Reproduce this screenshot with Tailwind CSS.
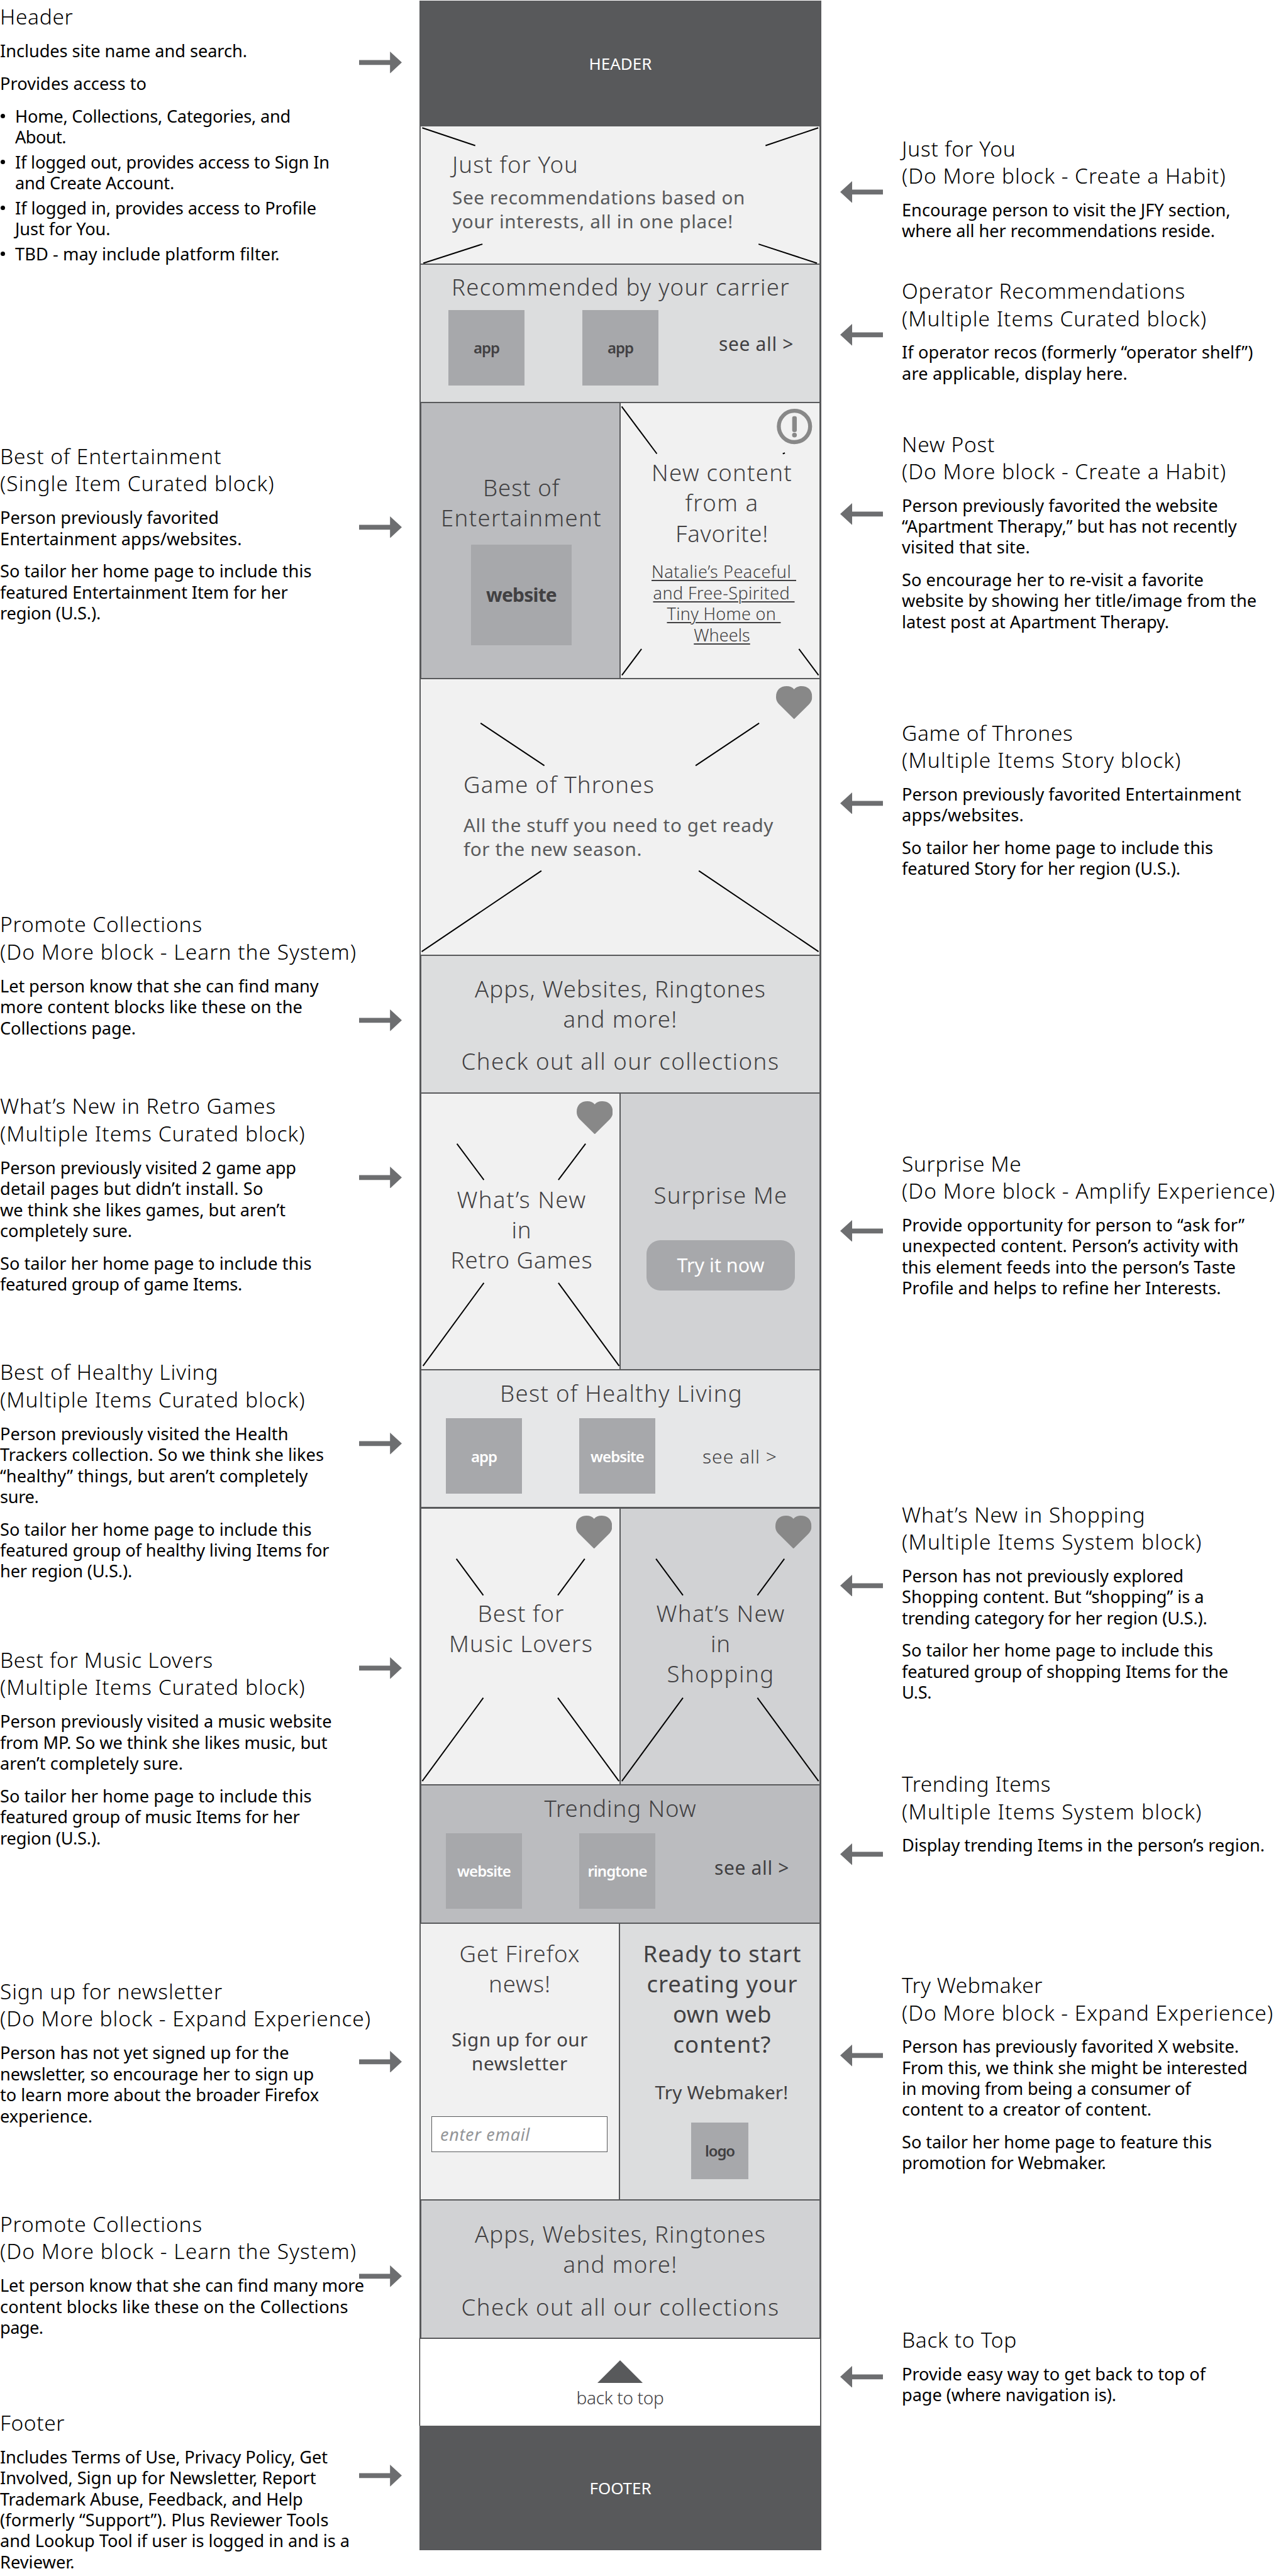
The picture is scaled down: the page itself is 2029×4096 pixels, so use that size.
<!DOCTYPE html>
<html lang="en">
<head>
<meta charset="utf-8">
<title>Home page wireframe</title>
<script src="https://cdn.jsdelivr.net/npm/@tailwindcss/browser@4"></script>
</head>
<body class="bg-white text-black font-['Noto_Sans','Open_Sans',sans-serif] w-[2029px] h-[4096px] overflow-hidden [&_span]:block [&_span]:w-fit [&_span]:whitespace-nowrap">

<!-- Shared shapes -->
<svg class="hidden">
  <symbol id="right" viewBox="0 0 68 34.7"><path fill="#6d6e70" d="M0 13.5H49.2V0L68 17.35L49.2 34.7V21.2H0Z"/></symbol>
  <symbol id="left" viewBox="0 0 68 34.7"><path fill="#6d6e70" d="M68 13.5H19V0L0 17.35L19 34.7V21.2H68Z"/></symbol>
  <symbol id="heart" viewBox="0 0 57.4 52.5"><path fill="#888" d="M28.7 52.5L5.5 29.5C1.5 25.5 0 22 0 17C0 6 7 0 17 0C22 0 26 1.5 28.7 5C31.4 1.5 35.4 0 40.4 0C50.4 0 57.4 6 57.4 17C57.4 22 55.9 25.5 51.9 29.5Z"/></symbol>
</svg>

<div class="flex h-full">

<!-- Left notes -->
<aside class="w-[667px] shrink-0 pt-[5px] text-[27.2px] leading-[33.4px] [&_section]:flex [&_section>div]:w-[570.8px] [&_section>div]:shrink-0 [&_section>svg]:w-[68px] [&_section>svg]:h-[34.7px] [&_section>svg]:shrink-0 [&_h2]:text-[33.5px] [&_h2]:leading-[43.4px] [&_h2]:font-light [&_h2]:mb-[15.6px] [&_p+p]:mt-[18.2px]">
  <section class="h-[698.9px]">
    <div>
      <h2><span data-w="116.5">Header</span></h2>
      <p><span data-w="393">Includes site name and search.</span></p>
      <p><span data-w="233">Provides access to</span></p>
      <ul class="mt-[18.6px] flex flex-col gap-[6.2px] [&>li]:flex [&>li>i]:w-6 [&>li>i]:pt-[13.5px] [&>li>i]:shrink-0">
        <li><i><b class="block size-[7px] ml-px rounded-full bg-black"></b></i><div><span data-w="438">Home, Collections, Categories, and</span><span data-w="81">About.</span></div></li>
        <li><i><b class="block size-[7px] ml-px rounded-full bg-black"></b></i><div><span data-w="500">If logged out, provides access to Sign In</span><span data-w="253">and Create Account.</span></div></li>
        <li><i><b class="block size-[7px] ml-px rounded-full bg-black"></b></i><div><span data-w="479">If logged in, provides access to Profile</span><span data-w="151.5">Just for You.</span></div></li>
        <li><i><b class="block size-[7px] ml-px rounded-full bg-black"></b></i><div><span data-w="420.5">TBD - may include platform filter.</span></div></li>
      </ul>
    </div>
    <svg class="mt-[76.9px]"><use href="#right"/></svg>
  </section>
  <section class="h-[744.5px]">
    <div>
      <h2><span data-w="352.5">Best of Entertainment</span><span data-w="436.5">(Single Item Curated block)</span></h2>
      <p><span data-w="348">Person previously favorited</span><span data-w="384.5">Entertainment apps/websites.</span></p>
      <p><span data-w="495.5">So tailor her home page to include this</span><span data-w="457.5">featured Entertainment Item for her</span><span data-w="160">region (U.S.).</span></p>
    </div>
    <svg class="mt-[116.8px]"><use href="#right"/></svg>
  </section>
  <section class="h-[289.1px]">
    <div>
      <h2><span data-w="322">Promote Collections</span><span data-w="567">(Do More block - Learn the System)</span></h2>
      <p><span data-w="506.5">Let person know that she can find many</span><span data-w="481">more content blocks like these on the</span><span data-w="216">Collections page.</span></p>
    </div>
    <svg class="mt-[156.9px]"><use href="#right"/></svg>
  </section>
  <section class="h-[422.8px]">
    <div>
      <h2><span data-w="439">What’s New in Retro Games</span><span data-w="485.5">(Multiple Items Curated block)</span></h2>
      <p><span data-w="471">Person previously visited 2 game app</span><span data-w="418.5">detail pages but didn’t install. So</span><span data-w="454">we think she likes games, but aren’t</span><span data-w="210">completely sure.</span></p>
      <p><span data-w="495.5">So tailor her home page to include this</span><span data-w="385">featured group of game Items.</span></p>
    </div>
    <svg class="mt-[117.1px]"><use href="#right"/></svg>
  </section>
  <section class="h-[457.6px]">
    <div>
      <h2><span data-w="347.5">Best of Healthy Living</span><span data-w="485.5">(Multiple Items Curated block)</span></h2>
      <p><span data-w="458.5">Person previously visited the Health</span><span data-w="515">Trackers collection. So we think she likes</span><span data-w="489.5">“healthy” things, but aren’t completely</span><span data-w="61.5">sure.</span></p>
      <p><span data-w="495.5">So tailor her home page to include this</span><span data-w="523.5">featured group of healthy living Items for</span><span data-w="210">her region (U.S.).</span></p>
    </div>
    <svg class="mt-[117.7px]"><use href="#right"/></svg>
  </section>
  <section class="h-[527px]">
    <div>
      <h2><span data-w="339">Best for Music Lovers</span><span data-w="485.5">(Multiple Items Curated block)</span></h2>
      <p><span data-w="527.5">Person previously visited a music website</span><span data-w="520.5">from MP. So we think she likes music, but</span><span data-w="291">aren’t completely sure.</span></p>
      <p><span data-w="495.5">So tailor her home page to include this</span><span data-w="476.5">featured group of music Items for her</span><span data-w="160">region (U.S.).</span></p>
    </div>
    <svg class="mt-[17px]"><use href="#right"/></svg>
  </section>
  <section class="h-[369.9px]">
    <div>
      <h2><span data-w="354">Sign up for newsletter</span><span data-w="590">(Do More block - Expand Experience)</span></h2>
      <p><span data-w="459.5">Person has not yet signed up for the</span><span data-w="499">newsletter, so encourage her to sign up</span><span data-w="507">to learn more about the broader Firefox</span><span data-w="147">experience.</span></p>
    </div>
    <svg class="mt-[115.9px]"><use href="#right"/></svg>
  </section>
  <section class="h-[316.1px]">
    <div>
      <h2><span data-w="322">Promote Collections</span><span data-w="567">(Do More block - Learn the System)</span></h2>
      <p><span data-w="579">Let person know that she can find many more</span><span data-w="553.5">content blocks like these on the Collections</span><span data-w="68.5">page.</span></p>
    </div>
    <svg class="mt-[87.7px]"><use href="#right"/></svg>
  </section>
  <section>
    <div>
      <h2><span data-w="103">Footer</span></h2>
      <p><span data-w="521">Includes Terms of Use, Privacy Policy, Get</span><span data-w="502.5">Involved, Sign up for Newsletter, Report</span><span data-w="481.5">Trademark Abuse, Feedback, and Help</span><span data-w="522.5">(formerly “Support”). Plus Reviewer Tools</span><span data-w="556">and Lookup Tool if user is logged in and is a</span><span data-w="118.5">Reviewer.</span></p>
    </div>
    <svg class="mt-[88.4px]"><use href="#right"/></svg>
  </section>
</aside>

<!-- Page wireframe -->
<main class="w-[639px] shrink-0 pt-px text-[#414042] [&>*]:relative [&>*]:border-[#58595b] [&_h3]:text-[36.6px] [&_h3]:leading-[48.1px] [&_h3]:font-light [&_svg.x]:absolute [&_svg.x]:left-0 [&_svg.x]:top-0 [&_svg.x]:stroke-black [&_svg.x]:stroke-2 [&_svg.x]:overflow-visible">

  <header class="h-[200px] bg-[#58595b] text-white text-[26px] flex items-center justify-center"><span data-w="100">HEADER</span></header>

  <section class="h-[218px] bg-[#f1f1f1] border-l-2 border-r-3 pt-[35.5px] pl-[50px]">
    <svg class="x" width="634" height="218" viewBox="669 201 634 218"><path fill="none" d="M671.4 203.2L755.7 231.5M1301.2 203.2L1217.3 231.5M767.2 388.1L673.1 418.5M1206.2 388.1L1299.1 418.5"/></svg>
    <h3><span data-w="201">Just for You</span></h3>
    <p class="mt-[10.9px] text-[29.7px] leading-[37.8px] text-[#58595b]"><span data-w="466">See recommendations based on</span><span data-w="447">your interests, all in one place!</span></p>
  </section>

  <section class="h-[220px] bg-[#dcddde] border-l-2 border-r-3 border-t-2 pt-[11px]">
    <h3 class="pl-[49px]"><span data-w="538">Recommended by your carrier</span></h3>
    <div class="mt-[13px] flex items-center pl-[44px] text-[24px] font-semibold">
      <div class="w-[121px] h-[120px] shrink-0 bg-[#a7a8ab] flex items-center justify-center"><span data-w="41">app</span></div>
      <div class="ml-[92px] w-[121px] h-[120px] shrink-0 bg-[#a7a8ab] flex items-center justify-center"><span data-w="41">app</span></div>
      <div class="ml-[96px] pb-[14px] text-[30px] font-normal"><span data-w="119">see all &gt;</span></div>
    </div>
  </section>

  <section class="h-[439px] border-l-3 border-r-3 border-t-2 flex">
    <div class="w-[317px] shrink-0 border-r-2 border-[#58595b] bg-[#bbbcbf] pt-[110.4px] pl-[3px] [&_span]:mx-auto">
      <h3><span data-w="122">Best of</span><span data-w="256">Entertainment</span></h3>
      <div class="mt-[18px] mx-auto w-[160px] h-[160px] bg-[#a7a8ab] flex items-center text-[30px] font-bold"><span data-w="112">website</span></div>
    </div>
    <div class="w-[316px] shrink-0 bg-[#f1f1f1] pt-[86.4px] pl-[6px] [&_span]:mx-auto">
      <h3><span data-w="224">New content</span><span data-w="117">from a</span><span data-w="148">Favorite!</span></h3>
      <p class="mt-[20.3px] text-[27px] leading-[33.6px] font-light [&>span]:underline [&>span]:underline-offset-[3px] [&>span]:decoration-[2px] [&>span]:relative"><span class="left-[3px]" data-w="230">Natalie’s Peaceful&nbsp;</span><span class="left-[3px]" data-w="225">and Free-Spirited&nbsp;</span><span class="left-[3px]" data-w="181">Tiny Home on&nbsp;</span><span data-w="89.5">Wheels</span></p>
    </div>
    <svg class="x" width="633" height="437" viewBox="670 641 633 437">
      <path fill="none" d="M988.5 646.4L1044.5 721.5M1244.7 721.5L1248.1 720.2M1020.1 1031.9L988.9 1073.6M1270.4 1031.9L1301.6 1073.6"/>
      <circle cx="1263.3" cy="678.1" r="24.9" fill="none" stroke="#888" stroke-width="6.3"/>
      <rect x="1259.7" y="661.7" width="7.3" height="25.2" rx="3" fill="#888" stroke="none"/><circle cx="1263.3" cy="691.8" r="3.8" fill="#888" stroke="none"/>
    </svg>
  </section>

  <section class="h-[440px] bg-[#f1f1f1] border-l-2 border-r-3 border-t-2 pt-[143.2px] pl-[68px]">
    <svg class="x" width="634" height="438" viewBox="669 1080 634 438"><path fill="none" d="M764.2 1149.9L865.6 1217.4M1207.1 1149.9L1106.1 1217.4M860.9 1384.6L670.5 1513.1M1111.2 1384.6L1301.6 1513.1"/></svg>
    <svg class="absolute left-[565.4px] top-[11.2px] w-[57.4px] h-[52.5px]"><use href="#heart"/></svg>
    <h3><span data-w="304">Game of Thrones</span></h3>
    <p class="mt-[22px] text-[29.7px] leading-[37.8px] text-[#58595b]"><span data-w="493">All the stuff you need to get ready</span><span data-w="284">for the new season.</span></p>
  </section>

  <section class="h-[219px] bg-[#dcddde] border-l-3 border-r-3 border-t-2 pt-[27.5px] [&_span]:mx-auto">
    <h3><span data-w="463">Apps, Websites, Ringtones</span><span data-w="182">and more!</span></h3>
    <h3 class="mt-[19.4px]"><span data-w="506">Check out all our collections</span></h3>
  </section>

  <section class="h-[440px] border-l-3 border-r-3 border-t-2 flex">
    <div class="w-[317px] shrink-0 border-r-2 border-[#58595b] bg-[#f1f1f1] pt-[143.5px] pl-[4px] [&_span]:mx-auto">
      <h3><span data-w="206">What’s New</span><span data-w="32">in</span><span data-w="226">Retro Games</span></h3>
    </div>
    <div class="w-[316px] shrink-0 bg-[#d1d2d4] pt-[137px] pl-[2px] [&_span]:mx-auto">
      <h3><span data-w="213">Surprise Me</span></h3>
      <div class="mt-[48.2px] mx-auto w-[236px] h-[80px] rounded-[22px] bg-[#a7a8ab] text-white text-[30.5px] flex items-center"><span data-w="139">Try it now</span></div>
    </div>
    <svg class="x" width="633" height="438" viewBox="670 1739 633 438"><path fill="none" d="M726.6 1818.6L769.4 1876.1M931.1 1818.6L887.9 1876.1M769.4 2039.8L672.7 2171.9M887.9 2039.8L984.5 2171.9"/></svg>
    <svg class="absolute left-[247px] top-[11.6px] w-[57.4px] h-[52.5px]"><use href="#heart"/></svg>
  </section>

  <section class="h-[219px] bg-[#e6e7e8] border-l-3 border-r-3 border-t-2 pt-[11.6px]">
    <h3 class="pl-[3px] [&_span]:mx-auto"><span data-w="386">Best of Healthy Living</span></h3>
    <div class="mt-[16.4px] flex items-center pl-[39px] text-[24px] font-semibold text-white">
      <div class="w-[121px] h-[120px] shrink-0 pt-[2px] bg-[#a7a8ab] flex items-center justify-center"><span data-w="41">app</span></div>
      <div class="ml-[91px] w-[121px] h-[120px] shrink-0 pt-[2px] bg-[#a7a8ab] flex items-center justify-center"><span data-w="85">website</span></div>
      <div class="ml-[75px] text-[30px] font-light text-[#414042]"><span data-w="119">see all &gt;</span></div>
    </div>
  </section>

  <section class="h-[441px] border-l-3 border-r-3 border-t-3 flex [&_span]:mx-auto">
    <div class="w-[317px] shrink-0 border-r-2 border-[#58595b] bg-[#f1f1f1] pt-[142.2px] pl-[2px]">
      <h3><span data-w="138">Best for</span><span data-w="229">Music Lovers</span></h3>
    </div>
    <div class="w-[316px] shrink-0 bg-[#d1d2d4] pt-[142.2px] pl-[2px]">
      <h3><span data-w="205">What’s New</span><span data-w="32">in</span><span data-w="171">Shopping</span></h3>
    </div>
    <svg class="x" width="633" height="438" viewBox="670 2399 633 438"><path fill="none" d="M725.7 2478.6L768.5 2536.6M929.8 2478.6L887 2536.6M768.5 2699.7L671.4 2832.1M887 2699.7L984.2 2832.1M1043.1 2478.6L1086 2536.6M1247.2 2478.6L1204.4 2536.6M1086 2699.7L988.8 2832.1M1204.4 2699.7L1301.6 2832.1"/></svg>
    <svg class="absolute left-[245.7px] top-[10.8px] w-[57.4px] h-[52.5px]"><use href="#heart"/></svg>
    <svg class="absolute left-[563.2px] top-[10.8px] w-[57.4px] h-[52.5px]"><use href="#heart"/></svg>
  </section>

  <section class="h-[220px] bg-[#bbbcbf] border-l-3 border-r-3 border-t-2 pt-[12px]">
    <h3 class="[&_span]:mx-auto"><span data-w="242">Trending Now</span></h3>
    <div class="mt-[16px] flex items-center pl-[39px] text-[24px] font-semibold text-white">
      <div class="w-[121px] h-[120px] shrink-0 bg-[#a7a8ab] flex items-center justify-center"><span data-w="85">website</span></div>
      <div class="ml-[91px] w-[121px] h-[120px] shrink-0 bg-[#a7a8ab] flex items-center justify-center"><span data-w="94">ringtone</span></div>
      <div class="ml-[94px] pb-[12px] text-[30px] font-normal text-[#414042]"><span data-w="119">see all &gt;</span></div>
    </div>
  </section>

  <section class="h-[440px] border-l-2 border-r-3 border-t-2 flex">
    <div class="w-[317px] shrink-0 border-r-2 border-[#58595b] bg-[#f1f1f1] pt-[22.6px]">
      <h3 class="[&_span]:mx-auto"><span data-w="192">Get Firefox</span><span data-w="99">news!</span></h3>
      <p class="mt-[46px] text-[29.7px] leading-[37.8px] [&_span]:mx-auto"><span data-w="217">Sign up for our</span><span data-w="153">newsletter</span></p>
      <div class="mt-[66px] ml-[17px] w-[280px] h-[57px] border border-[#58595b] bg-white pl-[13px] flex items-center text-[27px] italic text-[#939598]"><span data-w="143">enter email</span></div>
    </div>
    <div class="w-[317px] shrink-0 bg-[#dcddde] pt-[22.6px] [&_span]:mx-auto">
      <h3 class="pl-[8px] font-normal!"><span data-w="252">Ready to start</span><span data-w="240">creating your</span><span data-w="157">own web</span><span data-w="156">content?</span></h3>
      <p class="mt-[34px] pl-[6px] text-[29.7px] leading-[37.8px]"><span data-w="212">Try Webmaker!</span></p>
      <div class="mt-[29.6px] mx-auto w-[91px] h-[90px] bg-[#a7a8ab] flex items-center text-[24px] font-semibold"><span data-w="47">logo</span></div>
    </div>
  </section>

  <section class="h-[220px] bg-[#d1d2d4] border-l-3 border-r-3 border-t-2 pt-[29px] [&_span]:mx-auto">
    <h3><span data-w="463">Apps, Websites, Ringtones</span><span data-w="182">and more!</span></h3>
    <h3 class="mt-[19.4px]"><span data-w="506">Check out all our collections</span></h3>
  </section>

  <section class="h-[140px] bg-white border-l border-r-2 border-t-2 border-l-black! pt-[34.4px]">
    <svg class="mx-auto w-[72px] h-[36px]" viewBox="0 0 72 36"><path fill="#58595b" d="M36 0L72 36H0Z"/></svg>
    <p class="mt-[4px] text-[28px] leading-[38px] font-light text-[#414042] [&_span]:mx-auto"><span data-w="139">back to top</span></p>
  </section>

  <footer class="h-[198px] bg-[#58595b] text-white text-[26px] flex items-center justify-center"><span data-w="98">FOOTER</span></footer>
</main>

<!-- Right notes -->
<aside class="w-[723px] shrink-0 pt-[214.7px] pl-[30px] text-[27.2px] leading-[33.4px] [&_section]:flex [&_section]:gap-[30px] [&_section>svg]:w-[68px] [&_section>svg]:h-[34.7px] [&_section>svg]:shrink-0 [&_h2]:text-[33.5px] [&_h2]:leading-[43.4px] [&_h2]:font-light [&_h2]:mb-[15.2px] [&_p+p]:mt-[18.2px]">
  <section class="h-[226.7px]">
    <svg class="mt-[73.5px]"><use href="#left"/></svg>
    <div>
      <h2><span data-w="181.5">Just for You</span><span data-w="515.5">(Do More block - Create a Habit)</span></h2>
      <p><span data-w="522.5">Encourage person to visit the JFY section,</span><span data-w="498">where all her recommendations reside.</span></p>
    </div>
  </section>
  <section class="h-[243.2px]">
    <svg class="mt-[74px]"><use href="#left"/></svg>
    <div>
      <h2><span data-w="451">Operator Recommendations</span><span data-w="485">(Multiple Items Curated block)</span></h2>
      <p><span data-w="558.5">If operator recos (formerly “operator shelf”)</span><span data-w="359">are applicable, display here.</span></p>
    </div>
  </section>
  <section class="h-[459.1px]">
    <svg class="mt-[115.8px]"><use href="#left"/></svg>
    <div>
      <h2><span data-w="148">New Post</span><span data-w="516">(Do More block - Create a Habit)</span></h2>
      <p><span data-w="502.5">Person previously favorited the website</span><span data-w="532.5">“Apartment Therapy,” but has not recently</span><span data-w="204">visited that site.</span></p>
      <p><span data-w="480">So encourage her to re-visit a favorite</span><span data-w="564">website by showing her title/image from the</span><span data-w="425">latest post at Apartment Therapy.</span></p>
    </div>
  </section>
  <section class="h-[685.4px]">
    <svg class="mt-[116px]"><use href="#left"/></svg>
    <div>
      <h2><span data-w="272.5">Game of Thrones</span><span data-w="444.5">(Multiple Items Story block)</span></h2>
      <p><span data-w="539.5">Person previously favorited Entertainment</span><span data-w="194">apps/websites.</span></p>
      <p><span data-w="495">So tailor her home page to include this</span><span data-w="443">featured Story for her region (U.S.).</span></p>
    </div>
  </section>
  <section class="h-[558px]">
    <svg class="mt-[110.5px]"><use href="#left"/></svg>
    <div>
      <h2><span data-w="190.5">Surprise Me</span><span data-w="594">(Do More block - Amplify Experience)</span></h2>
      <p><span data-w="545">Provide opportunity for person to “ask for”</span><span data-w="535.5">unexpected content. Person’s activity with</span><span data-w="531">this element feeds into the person’s Taste</span><span data-w="507.5">Profile and helps to refine her Interests.</span></p>
    </div>
  </section>
  <section class="h-[428.4px]">
    <svg class="mt-[116.5px]"><use href="#left"/></svg>
    <div>
      <h2><span data-w="387.5">What’s New in Shopping</span><span data-w="477.5">(Multiple Items System block)</span></h2>
      <p><span data-w="448">Person has not previously explored</span><span data-w="480.5">Shopping content. But “shopping” is a</span><span data-w="485.5">trending category for her region (U.S.).</span></p>
      <p><span data-w="495">So tailor her home page to include this</span><span data-w="519">featured group of shopping Items for the</span><span data-w="47">U.S.</span></p>
    </div>
  </section>
  <section class="h-[319.7px]">
    <svg class="mt-[116px]"><use href="#left"/></svg>
    <div>
      <h2><span data-w="237">Trending Items</span><span data-w="477.5">(Multiple Items System block)</span></h2>
      <p><span data-w="577">Display trending Items in the person’s region.</span></p>
    </div>
  </section>
  <section class="h-[564.3px]">
    <svg class="mt-[116.1px]"><use href="#left"/></svg>
    <div>
      <h2><span data-w="224">Try Webmaker</span><span data-w="591">(Do More block - Expand Experience)</span></h2>
      <p><span data-w="536">Person has previously favorited X website.</span><span data-w="549.5">From this, we think she might be interested</span><span data-w="459.5">in moving from being a consumer of</span><span data-w="397">content to a creator of content.</span></p>
      <p><span data-w="493">So tailor her home page to feature this</span><span data-w="324.5">promotion for Webmaker.</span></p>
    </div>
  </section>
  <section>
    <svg class="mt-[62.3px]"><use href="#left"/></svg>
    <div>
      <h2><span data-w="183">Back to Top</span></h2>
      <p><span data-w="483">Provide easy way to get back to top of</span><span data-w="341">page (where navigation is).</span></p>
    </div>
  </section>
</aside>
</div>

<script>
  // Track each line to its measure (data-w, in pixels).
  function track() {
    const lines = [...document.querySelectorAll('[data-w]')];
    lines.forEach(line => { line.style.letterSpacing = '0px'; });
    const widths = lines.map(line => line.getBoundingClientRect().width);
    lines.forEach((line, i) => {
      const extra = Number(line.dataset.w) - widths[i];
      line.style.letterSpacing = (extra / line.textContent.length).toFixed(3) + 'px';
    });
  }
  addEventListener('load', () => { track(); requestAnimationFrame(track); setTimeout(track, 50); });
  document.fonts.ready.then(track);
</script>
</body>
</html>
